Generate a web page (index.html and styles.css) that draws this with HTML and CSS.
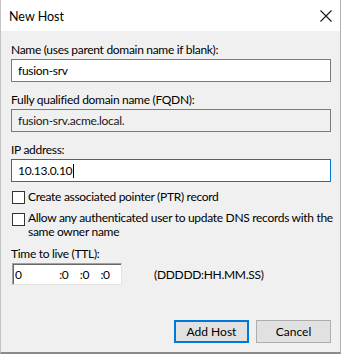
FILE: index.html
```html
<!DOCTYPE html>
<html>
<head>
<meta charset="utf-8">
<link rel="stylesheet" href="styles.css">
</head>
<body>
<div class="window">
  <div class="titlebar">
    <span class="title">New Host</span>
    <svg class="close" width="12" height="12" viewBox="0 0 12 12"><path d="M0.5 0.5 L11.5 11.5 M11.5 0.5 L0.5 11.5" stroke="#1a1a1a" stroke-width="1.1" fill="none"/></svg>
  </div>
  <div class="content">
    <div class="label l-name">Name (uses parent domain name if blank):</div>
    <div class="field">fusion-srv</div>
    <div class="label l-gap">Fully qualified domain name (FQDN):</div>
    <div class="field readonly">fusion-srv.acme.local.</div>
    <div class="label l-gap">IP address:</div>
    <div class="field focused">10.13.0.10<span class="caret"></span></div>
    <div class="check c1">
      <span class="box"></span>
      <span class="ctext">Create associated pointer (PTR) record</span>
    </div>
    <div class="check c2">
      <span class="box"></span>
      <span class="ctext">Allow any authenticated user to update DNS records with the same owner name</span>
    </div>
    <div class="label l-ttl">Time to live (TTL):</div>
    <div class="ttl-row">
      <div class="ttl">
        <span class="t-days">0</span>
        <span class="t-part">:0</span>
        <span class="t-part">:0</span>
        <span class="t-part">:0</span>
      </div>
      <span class="ttl-fmt">(DDDDD:HH.MM.SS)</span>
    </div>
    <div class="buttons">
      <button class="btn default">Add Host</button>
      <button class="btn">Cancel</button>
    </div>
  </div>
</div>
</body>
</html>
```
FILE: styles.css
```css
* { box-sizing: border-box; }
html, body { margin: 0; padding: 0; background: #f0f0f0; }
body {
  font-family: Lato, "Liberation Sans", Arial, sans-serif;
  font-size: 12px;
  letter-spacing: -0.3px;
  color: #000;
}
.window {
  width: 341px;
  height: 354px;
  background: #f0f0f0;
  border-left: 1px solid #c4c4c4;
  border-right: 1px solid #b0b0b0;
  border-bottom: 2px solid #8a8a8a;
  display: flex;
  flex-direction: column;
}
.titlebar {
  height: 31px;
  background: #fff;
  display: flex;
  align-items: center;
  justify-content: space-between;
  padding: 0 8px 0 8px;
}
.title { font-size: 12.5px; letter-spacing: 0; padding-top: 1px; }
.close { margin-right: 0px; }
.content {
  padding: 0 8px 0 10px;
  display: flex;
  flex-direction: column;
}
.label { line-height: 15px; height: 15px; margin-bottom: 2px; white-space: nowrap; }
.l-name { margin-top: 11px; }
.l-gap { margin-top: 10px; }
.field {
  width: 320px;
  height: 23px;
  border: 1px solid #7a7a7a;
  background: #fff;
  padding: 0 0 0 6px;
  line-height: 21px;
  display: flex;
  align-items: center;
}
.field.readonly { background: #f0f0f0; color: #1a1a1a; }
.field.focused { border-color: #0078d7; }
.caret { display: inline-block; width: 1px; height: 14px; background: #000; margin-left: 1px; }
.check { display: flex; align-items: flex-start; line-height: 14px; }
.c1 { margin-top: 8px; }
.c2 { margin-top: 7px; }
.box {
  flex: none;
  width: 13px;
  height: 13px;
  border: 1px solid #333;
  background: #fff;
  margin: 1px 3px 0 1px;
}
.c2 .box { margin-top: 2px; }
.ctext { flex: none; width: 305px; }
.l-ttl { margin-top: 7px; }
.ttl-row { display: flex; align-items: center; }
.ttl {
  margin-left: 1px;
  width: 110px;
  height: 22px;
  background: #fff;
  border-top: 1px solid #a0a0a0;
  border-left: 1px solid #a0a0a0;
  border-right: 1px solid #e3e3e3;
  border-bottom: 1px solid #e3e3e3;
  box-shadow: inset 1px 1px 0 #696969;
  display: flex;
  align-items: center;
  padding-left: 2px;
}
.t-days { width: 45px; }
.t-part { width: 21px; }
.ttl-fmt { margin-left: 32px; }
.buttons {
  display: flex;
  justify-content: flex-end;
  gap: 7px;
  margin-top: 35px;
  padding-right: 1px;
}
.btn {
  font: inherit;
  letter-spacing: 0;
  color: #000;
  width: 75px;
  height: 23px;
  background: #e1e1e1;
  border: 1px solid #adadad;
  padding: 0;
  margin: 0;
}
.btn.default { border: 2px solid #0078d7; }
```
